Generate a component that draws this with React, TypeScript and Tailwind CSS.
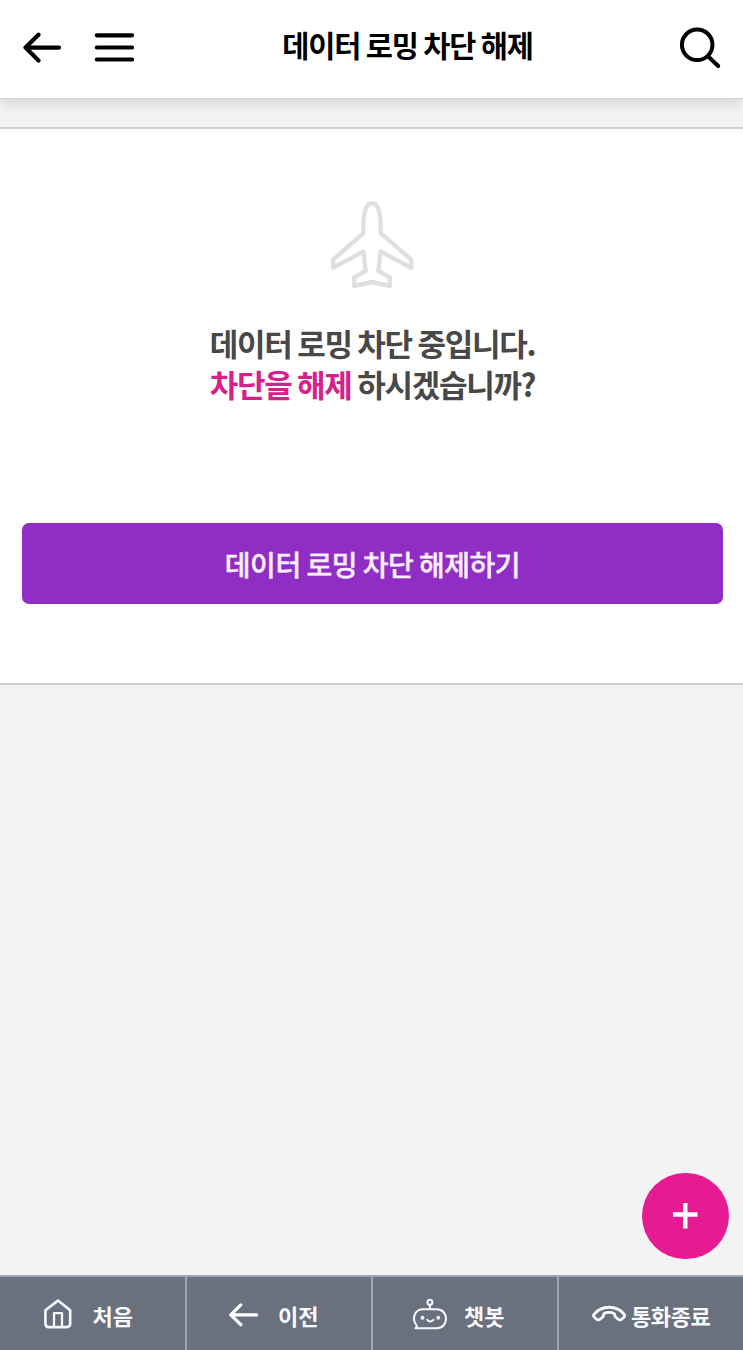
import type { ReactNode } from "react";

function BackIcon() {
  return (
    <svg width="40" height="32" viewBox="0 0 40 32" fill="none" stroke="#000" strokeWidth="4.2" strokeLinecap="round" strokeLinejoin="round">
      <path d="M37 15.6H3.5M16.5 2.8L3.5 15.6L16.5 28.6" />
    </svg>
  );
}

function MenuIcon() {
  return (
    <svg width="40" height="32" viewBox="0 0 40 32" fill="none" stroke="#000" strokeWidth="4.2" strokeLinecap="round">
      <path d="M2.8 3.3H38M2.8 15.5H38M2.8 27.5H38" />
    </svg>
  );
}

function SearchIcon() {
  return (
    <svg width="44" height="44" viewBox="0 0 44 44" fill="none" stroke="#000" strokeWidth="4" strokeLinecap="round">
      <circle cx="19.2" cy="18.8" r="15.3" />
      <path d="M30 30.2L40.2 40" />
    </svg>
  );
}

function PlaneIcon() {
  return (
    <svg className="shrink-0" width="90" height="94" viewBox="0 0 90 94" fill="none" stroke="#dfdfdf" strokeWidth="4.4" strokeLinejoin="round">
      <path d="M45 6.2C39.4 6.2 35.8 14 36.3 36.2L6.2 62.7V70.8L36.5 54.5L38.6 74L27.2 80.4V88.8L45 85L62.8 88.8V80.4L51.4 74L53.5 54.5L84.2 70.8V62.7L53.7 36.2C54.2 14 50.6 6.2 45 6.2Z" />
    </svg>
  );
}

function HomeIcon() {
  return (
    <svg width="30" height="32" viewBox="0 0 30 32" fill="none" stroke="#f8f9fc" strokeWidth="2.6" strokeLinejoin="round">
      <path d="M2.4 12.2L15 2.6L27.2 12.2V25.6Q27.2 29.1 23.7 29.1H5.9Q2.4 29.1 2.4 25.6Z" />
      <path d="M11 29V15.2H19V29" strokeWidth="2.3" />
    </svg>
  );
}

function PrevIcon() {
  return (
    <svg width="32" height="32" viewBox="0 0 32 32" fill="none" stroke="#fff" strokeWidth="3.2" strokeLinecap="round" strokeLinejoin="round">
      <path d="M28.6 16.9H2.8M12.8 6.9L2.8 16.9L12.8 26.7" />
    </svg>
  );
}

function ChatbotIcon() {
  return (
    <svg width="36" height="34" viewBox="0 0 36 34" fill="none" stroke="#f8f9fc" strokeWidth="2" strokeLinecap="round" strokeLinejoin="round">
      <circle cx="17.9" cy="5.2" r="2.5" />
      <path d="M17.9 8V12.2M3.5 31.2C5.8 29.9 4.8 28.4 3.3 26.2C0.4 21.2 2.4 12.3 11.2 12.3H24.8C37 12.3 37 31.2 24.8 31.2Z" />
      <path d="M15.2 22.8Q18.3 26.2 21.4 22.8" />
      <circle cx="10.5" cy="20.8" r="1" fill="#f8f9fc" />
      <circle cx="26.2" cy="20.8" r="1" fill="#f8f9fc" />
    </svg>
  );
}

function EndCallIcon() {
  return (
    <svg width="36" height="24" viewBox="0 0 36 24" fill="none" stroke="#f8f9fc" strokeWidth="2.8" strokeLinejoin="round">
      <path d="M3 12.3C10.5 2.9 25.8 2.9 33.3 12.3C34.2 13.5 33.6 14.5 32.6 15.5L30.7 17.3Q29 18.8 27.3 17.3L24.5 15C23.3 14 24.2 12.5 23.2 11.6C20.5 10 15.7 10 13 11.6C12 12.5 13 14 11.8 15L9 17.3Q7.3 18.8 5.6 17.3L3.7 15.5C2.6 14.5 2 13.5 3 12.3Z" />
    </svg>
  );
}

function NavItem({ label, className, children }: { label: string; className: string; children: ReactNode }) {
  return (
    <button className={`flex items-center text-[22px] leading-8 font-bold whitespace-nowrap text-[#f8f9fc] ${className}`}>
      {children}
      <span className="pt-[3px]">{label}</span>
    </button>
  );
}

export default function App() {
  return (
    <div className="relative flex h-[1350px] w-full flex-col overflow-hidden bg-[#f3f3f3] font-['Noto_Sans_CJK_KR',sans-serif]">
      <header className="z-10 grid h-[99px] shrink-0 grid-cols-[1fr_auto_1fr] items-center border-b border-[#d4d4d4] bg-white pr-[21px] pb-[2px] pl-[22px] shadow-[0_4px_14px_rgba(0,0,0,0.13)]">
        <div className="flex gap-8">
          <button aria-label="뒤로"><BackIcon /></button>
          <button aria-label="메뉴"><MenuIcon /></button>
        </div>
        <h1 className="pb-[8px] pl-[71px] text-[29.5px] leading-10 font-bold tracking-[-1.15px] whitespace-nowrap text-black">데이터 로밍 차단 해제</h1>
        <button aria-label="검색" className="justify-self-end"><SearchIcon /></button>
      </header>

      <main className="mt-[28px] flex h-[558px] shrink-0 flex-col items-center border-y-2 border-[#cfcfcf] bg-white pr-5 pl-[22px]">
        <div className="mt-[68px] pr-[2px]"><PlaneIcon /></div>
        <p className="mt-[31px] text-center text-[31px] leading-[41px] font-bold tracking-[-1.3px] whitespace-nowrap text-[#484848]">
          데이터 로밍 차단 중입니다.
          <br />
          <span className="text-[#d6218b]">차단을 해제</span> 하시겠습니까?
        </p>
        <button className="mt-[119px] h-[81px] w-full shrink-0 rounded-[7px] bg-[#902dc4] pt-px text-[28px] font-medium tracking-[-0.5px] text-[#fbeeff] [-webkit-text-stroke:0.4px_#fbeeff]">
          데이터 로밍 차단 해제하기
        </button>
      </main>

      <button aria-label="추가" className="absolute top-[1173px] left-[642px] flex h-[86px] w-[87px] items-center justify-center rounded-full bg-[#e71b91]">
        <svg width="26" height="26" viewBox="0 0 26 26" stroke="#fff" strokeWidth="4.4">
          <path d="M0 11.5H24.5M12.3 -0.5V25.5" />
        </svg>
      </button>

      <nav className="mt-auto grid h-[75px] shrink-0 grid-cols-[187px_186px_186px_184px] border-t-2 border-[#9ca6b8] bg-[#69707e]">
        <NavItem label="처음" className="gap-[20px] border-r-2 border-[#9ca6b8] pl-[42.5px]"><HomeIcon /></NavItem>
        <NavItem label="이전" className="gap-[18px] border-r-2 border-[#9ca6b8] pl-[41px]"><PrevIcon /></NavItem>
        <NavItem label="챗봇" className="gap-[16px] border-r-2 border-[#9ca6b8] pl-[39px]"><ChatbotIcon /></NavItem>
        <NavItem label="통화종료" className="gap-[4px] pl-[32px] tracking-[-0.4px]"><EndCallIcon /></NavItem>
      </nav>
    </div>
  );
}
